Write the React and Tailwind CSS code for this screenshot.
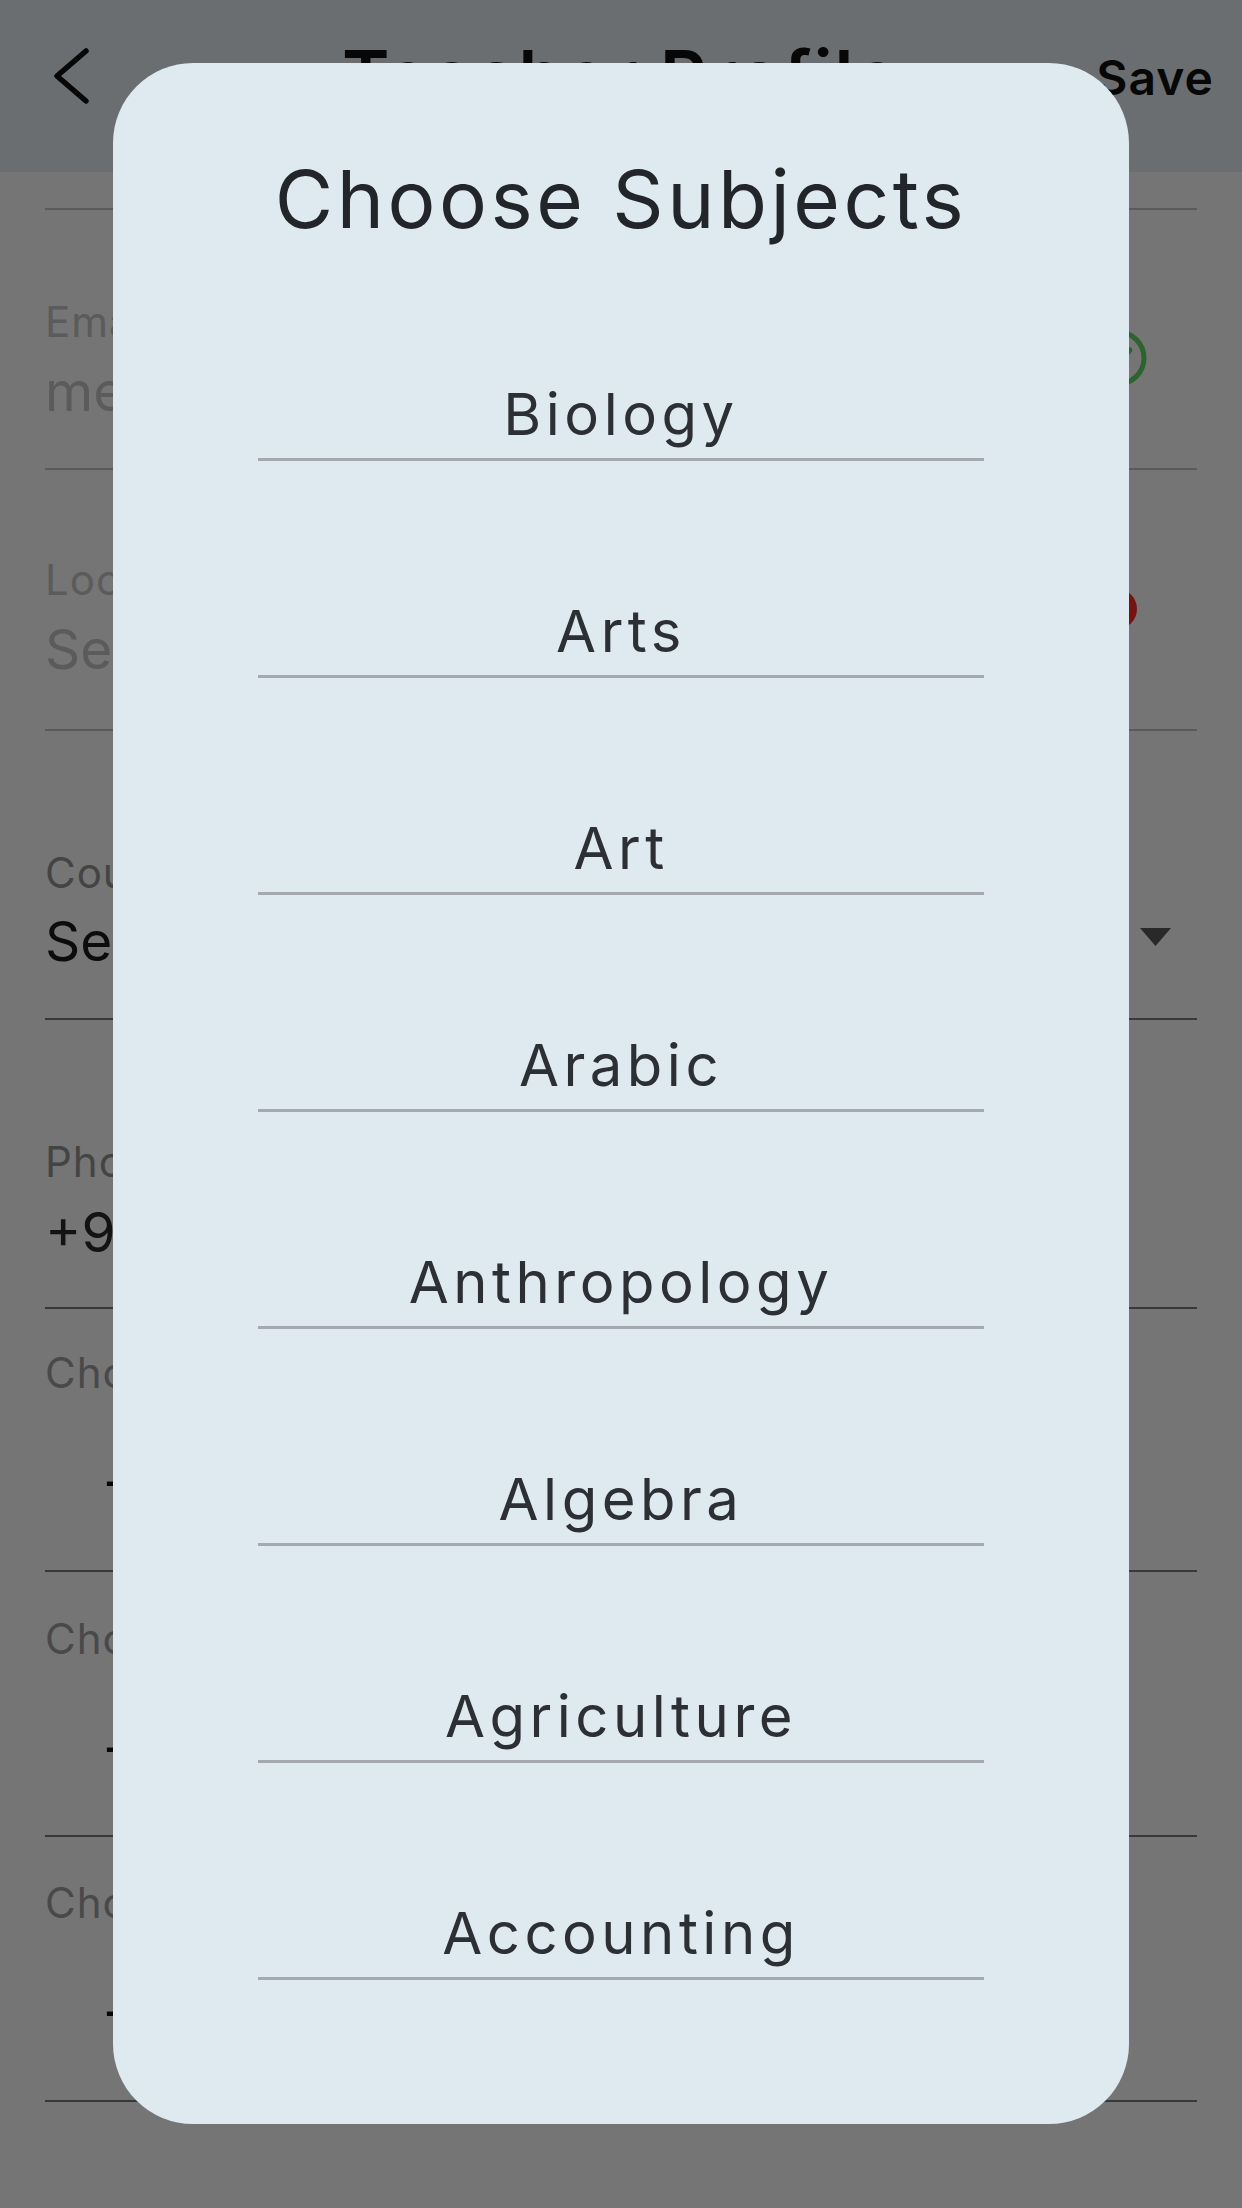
import { useState } from 'react';

const subjects = ['Biology', 'Arts', 'Art', 'Arabic', 'Anthropology', 'Algebra', 'Agriculture', 'Accounting'];

function Field({ className, label, labelClass, value, valueClass, icon }) {
  return (
    <div className={`flex items-start border-b-2 ${className}`}>
      <div className="flex-1 min-w-0 whitespace-nowrap">
        <p className={`text-[42px] leading-none tracking-[1px] ${labelClass}`}>{label}</p>
        <p className={`text-[55px] leading-none ${valueClass}`}>{value}</p>
      </div>
      {icon}
    </div>
  );
}

export default function App() {
  const [selected, setSelected] = useState(null);

  return (
    <div className="relative w-full h-[2208px] overflow-hidden bg-white [font-family:Inter,'Noto_Sans',sans-serif]">
      {/* Header */}
      <header className="h-[172px] pb-[20px] bg-[#eaf0f5]">
        <div className="flex h-full items-center">
          <div className="w-[180px] pl-[52px]">
            <svg width="40" height="60" viewBox="0 0 40 60" fill="none">
              <path d="M34 5 L5 30 L34 55" stroke="#111" strokeWidth="5.5" strokeLinecap="round" strokeLinejoin="round" />
            </svg>
          </div>
          <h1 className="flex-1 text-center text-[72px] leading-none font-semibold tracking-[2px] text-[#111]">Teacher Profile</h1>
          <div className="w-[180px] pr-[28px] text-right">
            <span className="inline-block mt-[4px] text-[48px] leading-none font-semibold tracking-[1px] text-[#111]">Save</span>
          </div>
        </div>
      </header>

      {/* Form behind the dialog */}
      <div className="px-[45px]">
        <div className="h-[38px] border-b-2 border-[#c4c4c4]" />
        <Field
          className="h-[260px] pt-[91px] border-[#c4c4c4]"
          label="Email"
          labelClass="text-[#c6c6c6]"
          value="me@tutor.pk"
          valueClass="mt-[21px] text-[#c6c6c6]"
          icon={
            <svg className="mt-[28px] mr-[50px]" width="58" height="58" viewBox="0 0 58 58" fill="none">
              <circle cx="29" cy="29" r="26" stroke="#5fd968" strokeWidth="5" />
              <path d="M17 30 L25 38 L41 21" stroke="#5fd968" strokeWidth="5" strokeLinecap="round" strokeLinejoin="round" />
            </svg>
          }
        />
        <Field
          className="h-[261px] pt-[89px] border-[#c4c4c4]"
          label="Location"
          labelClass="text-[#c6c6c6]"
          value="Select Location"
          valueClass="mt-[21px] text-[#c6c6c6]"
          icon={<span className="mt-[30px] mr-[60px] w-[40px] h-[40px] rounded-full bg-[#ff2a2a]" />}
        />
        <Field
          className="h-[289px] pt-[121px] border-[#7a7a7a]"
          label="Country"
          labelClass="text-[#959595]"
          value="Select Country"
          valueClass="mt-[20px] text-[#1c1c1c]"
          icon={
            <svg className="mt-[76px] mr-[26px]" width="31" height="18" viewBox="0 0 31 18">
              <path d="M0 0 H31 L15.5 18 Z" fill="#5a5a5a" />
            </svg>
          }
        />
        <Field
          className="h-[289px] pt-[121px] border-[#7a7a7a]"
          label="Phone Number"
          labelClass="text-[#959595]"
          value="+92 300 1234567"
          valueClass="mt-[22px] text-[#2a2a2a]"
        />
        <Field
          className="h-[263px] pt-[43px] border-[#7a7a7a]"
          label="Choose Subject 1"
          labelClass="text-[#a0a0a0]"
          value="-"
          valueClass="mt-[60px] pl-[58px] text-[#111]"
        />
        <Field
          className="h-[265px] pt-[46px] border-[#7a7a7a]"
          label="Choose Subject 2"
          labelClass="text-[#a0a0a0]"
          value="-"
          valueClass="mt-[60px] pl-[58px] text-[#111]"
        />
        <Field
          className="h-[265px] pt-[45px] border-[#7a7a7a]"
          label="Choose Subject 3"
          labelClass="text-[#a0a0a0]"
          value="-"
          valueClass="mt-[60px] pl-[58px] text-[#111]"
        />
      </div>

      {/* Dialog */}
      <div className="absolute inset-0 bg-black/[0.54]">
        <div className="mx-[113px] mt-[63px] rounded-[80px] bg-[#dfe9f0] pt-[96px] pb-[144px]">
          <h2 className="h-[80px] text-center text-[80px] leading-none tracking-[3.5px] text-[#22262a]">Choose Subjects</h2>
          <ul className="mt-[5px]">
            {subjects.map((s) => (
              <li
                key={s}
                onClick={() => setSelected(s)}
                className="mx-auto flex h-[217px] w-[726px] items-end justify-center border-b-[3px] border-[#a3a9ae] pb-[15px]"
              >
                <span className={`text-[58px] leading-none tracking-[4.5px] ${selected === s ? 'text-black' : 'text-[#2c3035]'}`}>{s}</span>
              </li>
            ))}
          </ul>
        </div>
      </div>
    </div>
  );
}
